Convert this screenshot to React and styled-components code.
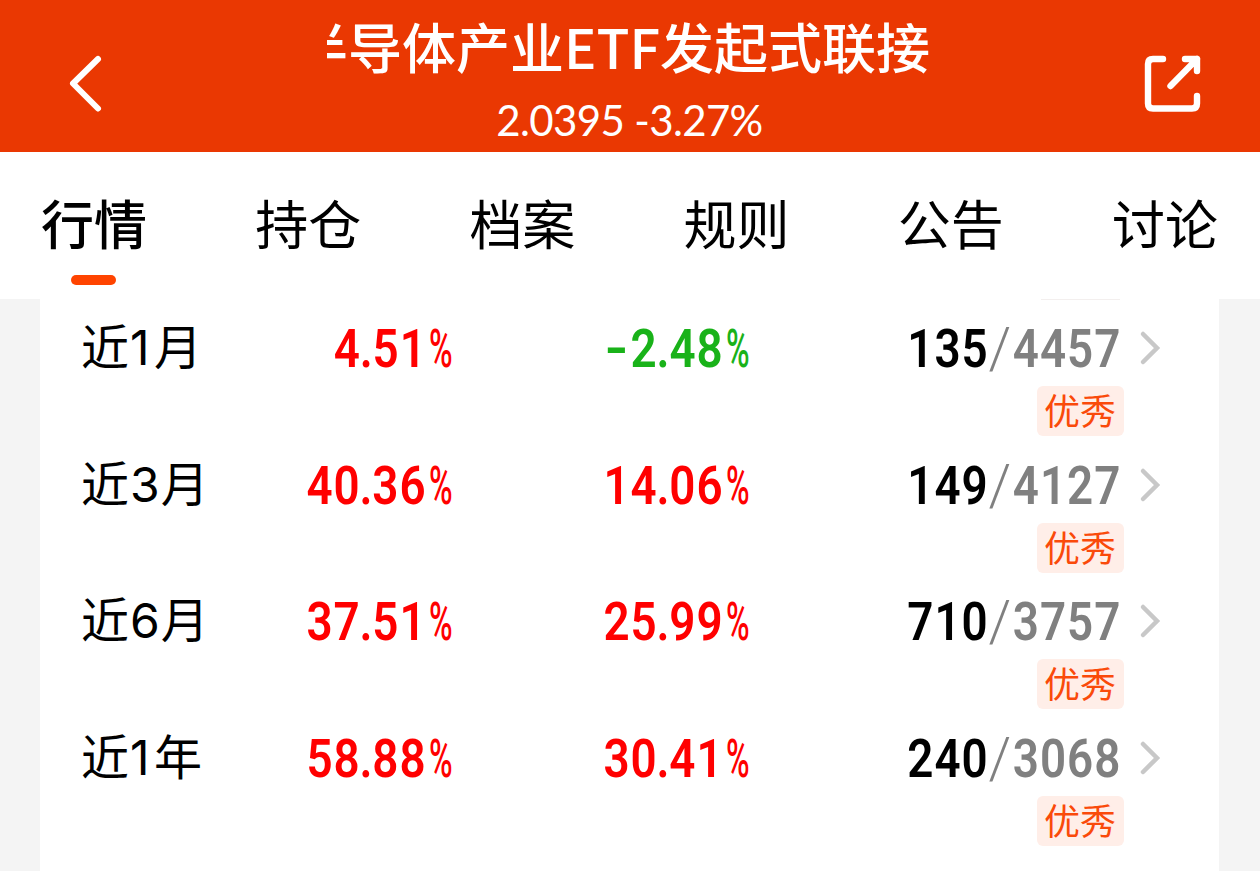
import styled, { createGlobalStyle } from "styled-components";

const GlobalStyle = createGlobalStyle`
  body {
    margin: 0;
    background-color: #f4f4f4;
    font-family: "Noto Sans CJK SC", sans-serif;
    color: black;
  }
`;

const Page = styled.div`
  display: flex;
  flex-direction: column;
  width: 1260px;
  height: 871px;
  overflow: hidden;
`;

const Header = styled.header`
  display: flex;
  justify-content: space-between;
  align-items: center;
  height: 152px;
  flex-shrink: 0;
  box-sizing: border-box;
  padding: 0 56px 0 67px;
  background-color: #ea3802;
  color: white;

  svg {
    display: block;
    margin-top: 16px;
  }
`;

const HeaderText = styled.div`
  display: flex;
  flex-direction: column;
  align-items: center;
  width: 605px;
  height: 152px;
  margin-left: 10px;
`;

const Marquee = styled.div`
  display: flex;
  justify-content: flex-end;
  width: 100%;
  height: 98px;
  overflow: hidden;
`;

const FundName = styled.h1`
  margin: 0 2px 0 0;
  font-size: 54px;
  font-weight: 500;
  line-height: 92px;
  white-space: nowrap;
`;

const FundPrice = styled.div`
  font-family: Lato, sans-serif;
  font-size: 42px;
  line-height: 44px;
  letter-spacing: -0.65px;
  white-space: nowrap;
`;

const Tabs = styled.nav`
  display: flex;
  justify-content: space-between;
  height: 147px;
  flex-shrink: 0;
  box-sizing: border-box;
  padding: 0 42px 0 41px;
  background-color: white;
`;

const Tab = styled.a`
  display: flex;
  flex-direction: column;
  align-items: center;
  font-size: 53px;
  font-weight: ${(props) => (props.$isActive ? 500 : 400)};
  line-height: 121px;
  padding-top: 10px;
  box-sizing: border-box;
  height: 147px;

  &::after {
    content: "";
    width: 45px;
    height: 10px;
    margin: -8px 1px 0 0;
    border-radius: 5px;
    background-color: ${(props) => (props.$isActive ? "#ff4400" : "transparent")};
  }
`;

const Panel = styled.main`
  flex: 1;
  margin: 0 41px 0 40px;
  background-color: white;
`;

const BadgeEdge = styled.div`
  width: 79px;
  height: 1px;
  margin-left: 1001px;
  background-color: #f3efee;
`;

const Row = styled.div`
  display: grid;
  grid-template-columns: 200px 172px 297px 371px 1fr;
  grid-template-rows: 86px 50.67px;
  padding-left: 41px;
  height: 136.67px;
`;

const Label = styled.div`
  font-size: 48px;
  line-height: 88px;
  white-space: nowrap;
`;

const Count = styled.span`
  display: inline-block;
  min-width: 25px;
  padding: 0 1px;
  box-sizing: border-box;
  font-family: Inter, sans-serif;
`;

const Figure = styled.div`
  display: flex;
  justify-content: flex-end;
  font-family: Roboto, sans-serif;
  font-size: 53.5px;
  font-weight: 600;
  line-height: 97px;
  white-space: nowrap;
  color: ${(props) => props.$color};
`;

const Digits = styled.span`
  margin-right: ${(props) => props.$gap || 0}px;
  letter-spacing: 1.2px;
  transform: scaleX(0.855);
  transform-origin: right;
`;

const Sign = styled.span`
  display: inline-block;
  margin-right: 1px;
  transform: scaleX(1.4);
  transform-origin: right;
`;

const Point = styled.span`
  margin: 0 -1.4px;
`;

const Percent = styled.span`
  width: 24px;
  font-weight: 500;
  transform: scaleX(0.6);
  transform-origin: left;
`;

const Total = styled.span`
  color: #808080;
`;

const Slash = styled.span`
  display: inline-block;
  width: 28px;
  font-weight: 300;
  text-align: center;
  color: #808080;
  transform: scale(1.25, 1.06);
`;

const Arrow = styled.svg`
  display: block;
  margin: 30px 0 0 17px;
`;

const BadgeCell = styled.div`
  grid-column: 1 / 5;
  display: flex;
  justify-content: flex-end;
`;

const Badge = styled.span`
  width: 87px;
  height: 50px;
  margin-right: -3px;
  padding-right: 1px;
  box-sizing: border-box;
  border-radius: 6px;
  background-color: #ffeee8;
  color: #fa4a0a;
  font-size: 36px;
  line-height: 47px;
  text-align: center;
`;

const tabs = ["行情", "持仓", "档案", "规则", "公告", "讨论"];

const rows = [
  { count: 1, unit: "月", fund: "4.51", average: "-2.48", rank: "135", total: "4457" },
  { count: 3, unit: "月", fund: "40.36", average: "14.06", rank: "149", total: "4127" },
  { count: 6, unit: "月", fund: "37.51", average: "25.99", rank: "710", total: "3757" },
  { count: 1, unit: "年", fund: "58.88", average: "30.41", rank: "240", total: "3068" },
];

function Change({ value }) {
  const isNegative = value.startsWith("-");
  const [whole, decimals] = value.replace("-", "").split(".");

  return (
    <Figure $color={isNegative ? "#19b219" : "#ff0000"}>
      <Digits $gap={2}>
        {isNegative && <Sign>-</Sign>}
        {whole}
        <Point>.</Point>
        {decimals}
      </Digits>
      <Percent>%</Percent>
    </Figure>
  );
}

export default function App() {
  return (
    <>
      <GlobalStyle />
      <Page>
        <Header>
          <svg width="38" height="60" viewBox="0 0 38 60" fill="none">
            <path
              d="M31 5L6 29.5L31 54.5"
              stroke="white"
              strokeWidth="6"
              strokeLinecap="round"
              strokeLinejoin="round"
            />
          </svg>
          <HeaderText>
            <Marquee>
              <FundName>半导体产业ETF发起式联接</FundName>
            </Marquee>
            <FundPrice>2.0395 -3.27%</FundPrice>
          </HeaderText>
          <svg width="60" height="60" viewBox="0 0 60 60" fill="none">
            <path
              d="M19 5H9Q4 5 4 10V49.500Q4 54.500 9 54.500H48Q53 54.500 53 49.500V42M41 5H53V17M53 5L26.500 32"
              stroke="white"
              strokeWidth="6.4"
              strokeLinecap="round"
              strokeLinejoin="round"
            />
          </svg>
        </Header>
        <Tabs>
          {tabs.map((tab, index) => (
            <Tab key={tab} $isActive={index === 0}>
              {tab}
            </Tab>
          ))}
        </Tabs>
        <Panel>
          <BadgeEdge />
          {rows.map((row) => (
            <Row key={row.count + row.unit}>
              <Label>
                近<Count>{row.count}</Count>
                {row.unit}
              </Label>
              <Change value={row.fund} />
              <Change value={row.average} />
              <Figure $color="black">
                <Digits>
                  {row.rank}
                  <Slash>/</Slash>
                  <Total>{row.total}</Total>
                </Digits>
              </Figure>
              <Arrow width="24" height="36" viewBox="0 0 24 36" fill="none">
                <path
                  d="M5 4L19 18L5 32"
                  stroke="#c8c8c8"
                  strokeWidth="4.5"
                  strokeLinecap="round"
                />
              </Arrow>
              <BadgeCell>
                <Badge>优秀</Badge>
              </BadgeCell>
            </Row>
          ))}
        </Panel>
      </Page>
    </>
  );
}
